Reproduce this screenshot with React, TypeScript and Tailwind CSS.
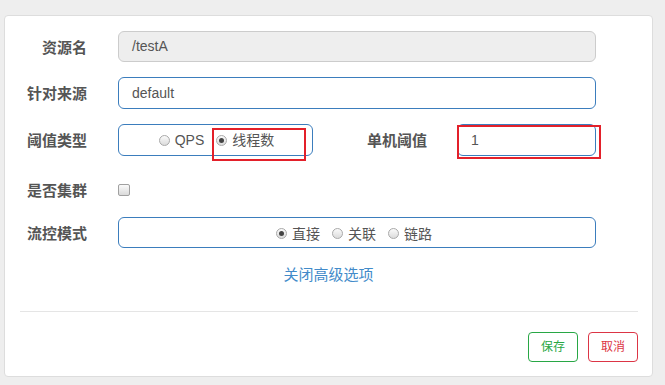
import React from "react";

const FONT = '"Liberation Sans", "Noto Sans CJK SC", sans-serif';

function Radio({ checked }: { checked?: boolean }) {
  return (
    <span className="relative inline-flex h-[11px] w-[11px] shrink-0 items-center justify-center rounded-full border border-[#a9a9a9] bg-gradient-to-b from-[#fafafa] to-[#dcdcdc]">
      {checked && <span className="h-[5px] w-[5px] rounded-full bg-[#444]" />}
    </span>
  );
}

function RadioItem({ label, checked }: { label: string; checked?: boolean }) {
  return (
    <span className="inline-flex items-center gap-[5px]">
      <Radio checked={checked} />
      <span className="text-[14px] leading-[20px] text-[#555]">{label}</span>
    </span>
  );
}

function Label({ children, w = "w-[82px]" }: { children: React.ReactNode; w?: string }) {
  return (
    <div className={`${w} relative top-[1px] shrink-0 text-right text-[15px] font-bold leading-[20px] text-[#555]`}>
      {children}
    </div>
  );
}

export default function App() {
  return (
    <div className="min-h-[385px] bg-[#eeeeee] pt-[15px] pl-[4px]" style={{ fontFamily: FONT }}>
      <div className="relative box-border h-[362px] w-[649px] rounded-[4px] border border-[#dddddd] bg-white pt-[15px]">
        {/* Row 1 */}
        <div className="flex items-center gap-[31px]">
          <Label>资源名</Label>
          <div className="flex h-[31px] w-[478px] items-center rounded-[6px] border border-[#cccccc] bg-[#eeeeee] pl-[13px] text-[14px] text-[#555]">
            /testA
          </div>
        </div>
        {/* Row 2 */}
        <div className="mt-[15px] flex items-center gap-[31px]">
          <Label>针对来源</Label>
          <div className="flex h-[32px] w-[478px] items-center rounded-[6px] border border-[#3b7dbd] bg-white pl-[13px] text-[14px] text-[#555]">
            default
          </div>
        </div>
        {/* Row 3 */}
        <div className="mt-[15px] flex items-center">
          <Label>阈值类型</Label>
          <div className="ml-[31px] flex h-[32px] w-[195px] items-center justify-center gap-[12px] rounded-[6px] border border-[#3b7dbd] bg-white pl-[2px]">
            <RadioItem label="QPS" />
            <RadioItem label="线程数" checked />
          </div>
          <Label w="w-[114px]">单机阈值</Label>
          <div className="ml-[30px] flex h-[32px] w-[139px] items-center rounded-[6px] border border-[#3b7dbd] bg-white pl-[13px] text-[14px] text-[#555]">
            1
          </div>
        </div>
        {/* Row 4 */}
        <div className="mt-[27px] flex h-[13px] items-center gap-[31px]">
          <Label>是否集群</Label>
          <span className="h-[12px] w-[12px] rounded-[2px] border border-[#a0a0a0] bg-gradient-to-b from-[#fafafa] to-[#dadada]" />
        </div>
        {/* Row 5 */}
        <div className="mt-[21px] flex items-center gap-[31px]">
          <Label>流控模式</Label>
          <div className="flex h-[31px] w-[478px] items-center justify-center gap-[12px] rounded-[6px] border border-[#3b7dbd] bg-white pt-[2px] pr-[6px]">
            <RadioItem label="直接" checked />
            <RadioItem label="关联" />
            <RadioItem label="链路" />
          </div>
        </div>
        {/* Link */}
        <div className="mt-[17px] text-center text-[15px] leading-[20px] text-[#428bca]">关闭高级选项</div>
        {/* Divider */}
        <div className="mt-[26px] ml-[15px] mr-[14px] h-px bg-[#e5e5e5]" />
        {/* Buttons */}
        <div className="mt-[20px] flex justify-end gap-[10px] pr-[14px]">
          <button className="h-[30px] w-[50px] rounded-[4px] border border-[#28a745] bg-white text-[12px] text-[#28a745]">
            保存
          </button>
          <button className="h-[30px] w-[50px] rounded-[4px] border border-[#dc3545] bg-white text-[12px] text-[#dc3545]">
            取消
          </button>
        </div>

        {/* Red annotation boxes */}
        <div className="absolute left-[207px] top-[112px] h-[33px] w-[94px] border-2 border-[#e3202a]" />
        <div className="absolute left-[452px] top-[109px] h-[34px] w-[144px] border-2 border-[#e3202a]" />
      </div>
    </div>
  );
}
